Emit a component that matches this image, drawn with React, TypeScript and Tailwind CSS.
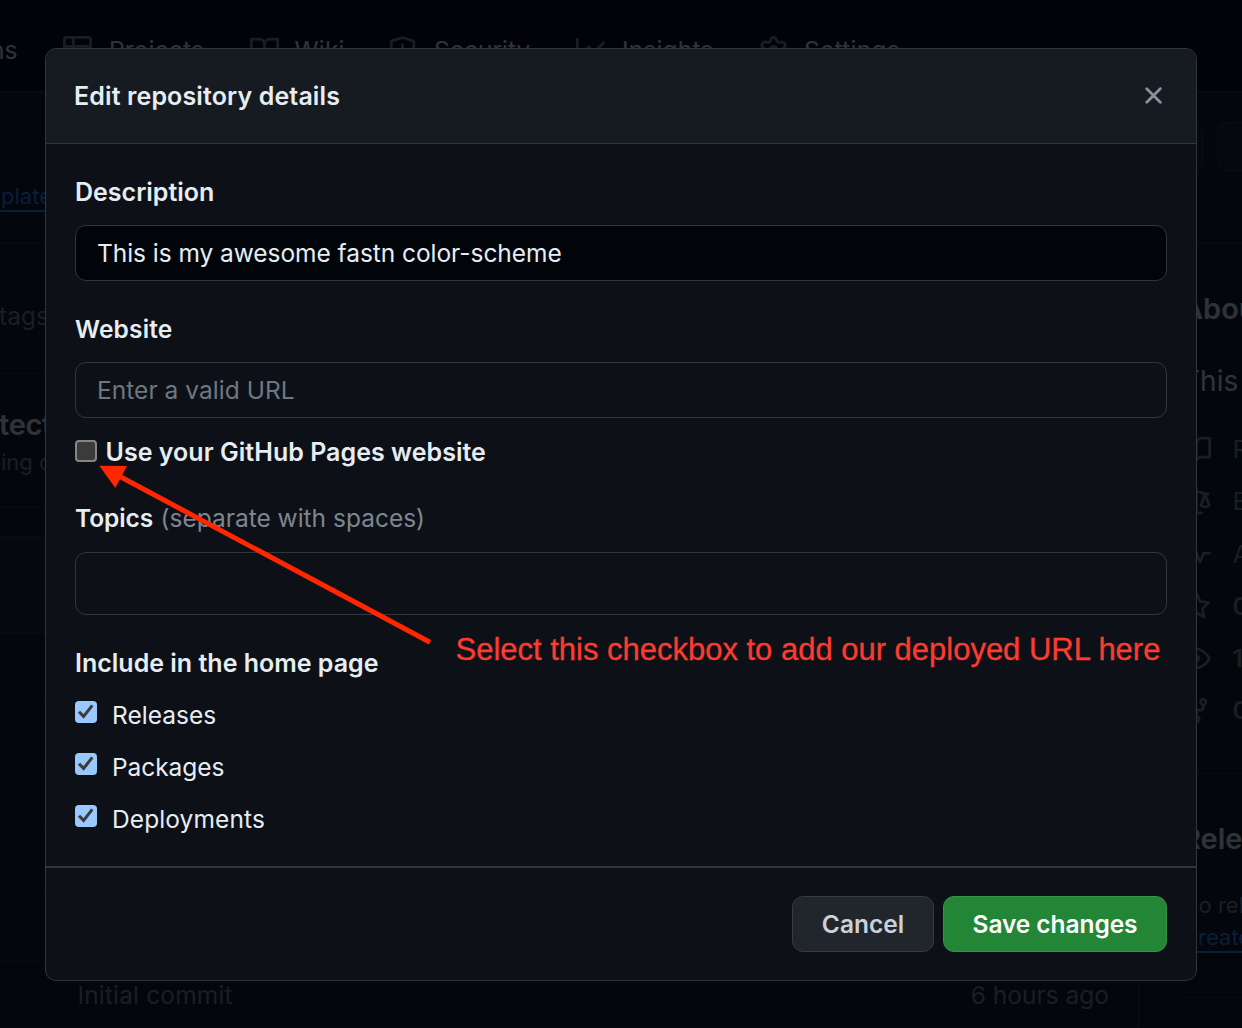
import React from "react";
import type { ReactNode } from "react";

type IconProps = { className?: string };

function Glyph({ className, children }: { className?: string; children: ReactNode }) {
  return (
    <svg viewBox="0 0 16 16" className={className} fill="currentColor" aria-hidden="true">
      {children}
    </svg>
  );
}

const TableIcon = ({ className }: IconProps) => (
  <Glyph className={className}>
    <path d="M0 1.75C0 .784.784 0 1.75 0h12.5C15.216 0 16 .784 16 1.75v12.5A1.75 1.75 0 0 1 14.25 16H1.75A1.75 1.75 0 0 1 0 14.25ZM6.5 6.5v8h7.75a.25.25 0 0 0 .25-.25V6.5Zm8-1.5V1.75a.25.25 0 0 0-.25-.25H6.5V5Zm-13 1.5v7.75c0 .138.112.25.25.25H5v-8ZM5 5V1.5H1.75a.25.25 0 0 0-.25.25V5Z" />
  </Glyph>
);

const BookIcon = ({ className }: IconProps) => (
  <Glyph className={className}>
    <path d="M0 1.75A.75.75 0 0 1 .75 1h4.253c1.227 0 2.317.59 3 1.501A3.743 3.743 0 0 1 11.006 1h4.245a.75.75 0 0 1 .75.75v10.5a.75.75 0 0 1-.75.75h-4.507a2.25 2.25 0 0 0-1.591.659l-.622.621a.75.75 0 0 1-1.06 0l-.622-.621A2.25 2.25 0 0 0 5.258 13H.75a.75.75 0 0 1-.75-.75Zm7.251 10.324.004-5.073-.002-2.253A2.25 2.25 0 0 0 5.003 2.5H1.5v9h3.757a3.75 3.75 0 0 1 1.994.574ZM8.755 4.75l-.004 7.322a3.752 3.752 0 0 1 1.992-.572H14.5v-9h-3.495a2.25 2.25 0 0 0-2.25 2.25Z" />
  </Glyph>
);

const ShieldIcon = ({ className }: IconProps) => (
  <Glyph className={className}>
    <g fill="none" stroke="currentColor" strokeWidth="1.5" strokeLinecap="round">
      <path d="M7.7.95 2.4 2.65a.9.9 0 0 0-.65.9V7c0 3.6 2.3 6.6 6.25 8.2C11.95 13.6 14.25 10.6 14.25 7V3.55a.9.9 0 0 0-.65-.9L8.3.95a1 1 0 0 0-.6 0Z" />
      <path d="M8 4.75v3" />
    </g>
    <circle cx="8" cy="10.5" r="1" />
  </Glyph>
);

const GraphIcon = ({ className }: IconProps) => (
  <Glyph className={className}>
    <path d="M1.5 1.75V13.5h13.75a.75.75 0 0 1 0 1.5H.75a.75.75 0 0 1-.75-.75V1.75a.75.75 0 0 1 1.5 0Zm14.28 2.53-5.25 5.25a.75.75 0 0 1-1.06 0L7 7.06 4.28 9.78a.751.751 0 0 1-1.042-.018.751.751 0 0 1-.018-1.042l3.25-3.25a.75.75 0 0 1 1.06 0L10 7.94l4.72-4.72a.751.751 0 0 1 1.042.018.751.751 0 0 1 .018 1.042Z" />
  </Glyph>
);

const GearIcon = ({ className }: IconProps) => (
  <Glyph className={className}>
    <g fill="none" stroke="currentColor" strokeWidth="1.5" strokeLinejoin="round">
      <path d="M8 .75c1 0 1.3.3 1.5 1.2.3 1.3 1 1.8 2.2 1.5 1.3-.4 1.9-.3 2.5.8.5 1 .4 1.5-.5 2.2-1 .8-1 2.3 0 3.1.9.7 1 1.200.5 2.200-.6 1.100-1.200 1.200-2.500.8-1.200-.3-1.900.200-2.200 1.500-.2.900-.5 1.200-1.500 1.200s-1.300-.3-1.500-1.200c-.3-1.300-1-1.800-2.200-1.500-1.300.4-1.900.3-2.500-.8-.5-1-.4-1.500.5-2.200 1-.8 1-2.300 0-3.100-.9-.7-1-1.200-.5-2.200.6-1.100 1.200-1.200 2.500-.8 1.200.3 1.900-.2 2.200-1.500C6.700 1.050 7 .75 8 .75Z" />
      <circle cx="8" cy="8" r="2.250" />
    </g>
  </Glyph>
);

const CloseIcon = ({ className }: IconProps) => (
  <Glyph className={className}>
    <path d="M3.72 3.72a.75.75 0 0 1 1.06 0L8 6.94l3.22-3.22a.749.749 0 0 1 1.275.326.749.749 0 0 1-.215.734L9.06 8l3.22 3.22a.749.749 0 0 1-.326 1.275.749.749 0 0 1-.734-.215L8 9.06l-3.22 3.22a.751.751 0 0 1-1.042-.018.751.751 0 0 1-.018-1.042L6.94 8 3.72 4.78a.75.75 0 0 1 0-1.06Z" />
  </Glyph>
);

const LawIcon = ({ className }: IconProps) => (
  <Glyph className={className}>
    <g
      fill="none"
      stroke="currentColor"
      strokeWidth="1.5"
      strokeLinecap="round"
      strokeLinejoin="round"
    >
      <path d="M8 .9v13.350M5.200 14.250h5.600M1.500 3.750h2.200L8 2.200l4.300 1.550h2.200" />
      <path d="M3.250 3.900 1 10.200c1.300 1.100 3.200 1.100 4.500 0ZM12.750 3.900 10.500 10.200c1.300 1.100 3.200 1.100 4.500 0Z" />
    </g>
  </Glyph>
);

const PulseIcon = ({ className }: IconProps) => (
  <Glyph className={className}>
    <path d="M6 2c.306 0 .582.187.696.471L10 10.731l1.304-3.26A.751.751 0 0 1 12 7h3.25a.75.75 0 0 1 0 1.5h-2.742l-1.812 4.528a.751.751 0 0 1-1.392 0L6 4.77 4.696 8.03A.75.75 0 0 1 4 8.5H.75a.75.75 0 0 1 0-1.5h2.742l1.812-4.529A.751.751 0 0 1 6 2Z" />
  </Glyph>
);

const StarIcon = ({ className }: IconProps) => (
  <Glyph className={className}>
    <path d="M8 .25a.75.75 0 0 1 .673.418l1.882 3.815 4.21.612a.75.75 0 0 1 .416 1.279l-3.046 2.97.719 4.192a.751.751 0 0 1-1.088.791L8 12.347l-3.766 1.98a.75.75 0 0 1-1.088-.79l.72-4.194L.818 6.374a.75.75 0 0 1 .416-1.28l4.21-.611L7.327.668A.75.75 0 0 1 8 .25Zm0 2.445L6.615 5.5a.75.75 0 0 1-.564.41l-3.097.45 2.24 2.184a.75.75 0 0 1 .216.664l-.528 3.084 2.769-1.456a.75.75 0 0 1 .698 0l2.77 1.456-.53-3.084a.75.75 0 0 1 .216-.664l2.24-2.183-3.096-.45a.75.75 0 0 1-.564-.41L8 2.694Z" />
  </Glyph>
);

const EyeIcon = ({ className }: IconProps) => (
  <Glyph className={className}>
    <path d="M8 2c1.981 0 3.671.992 4.933 2.078 1.27 1.091 2.187 2.345 2.637 3.023a1.62 1.62 0 0 1 0 1.798c-.45.678-1.367 1.932-2.637 3.023C11.67 13.008 9.981 14 8 14c-1.981 0-3.671-.992-4.933-2.078C1.797 10.83.88 9.576.43 8.898a1.62 1.62 0 0 1 0-1.798c.45-.677 1.367-1.931 2.637-3.022C4.33 2.992 6.019 2 8 2ZM1.679 7.932a.12.12 0 0 0 0 .136c.411.622 1.241 1.75 2.366 2.717C5.176 11.758 6.527 12.5 8 12.5c1.473 0 2.825-.742 3.955-1.715 1.124-.967 1.954-2.096 2.366-2.717a.12.12 0 0 0 0-.136c-.412-.621-1.242-1.75-2.366-2.717C10.824 4.242 9.473 3.5 8 3.5c-1.473 0-2.825.742-3.955 1.715-1.124.967-1.954 2.096-2.366 2.717ZM8 10a2 2 0 1 1-.001-3.999A2 2 0 0 1 8 10Z" />
  </Glyph>
);

const ForkIcon = ({ className }: IconProps) => (
  <Glyph className={className}>
    <path d="M5 5.372v.878c0 .414.336.75.75.75h4.5a.75.75 0 0 0 .75-.75v-.878a2.25 2.25 0 1 1 1.5 0v.878a2.25 2.25 0 0 1-2.25 2.25h-1.5v2.128a2.251 2.251 0 1 1-1.5 0V8.5h-1.5A2.25 2.25 0 0 1 3.5 6.25v-.878a2.25 2.25 0 1 1 1.5 0ZM5 3.25a.75.75 0 1 0-1.5 0 .75.75 0 0 0 1.5 0Zm6.75.75a.75.75 0 1 0 0-1.5.75.75 0 0 0 0 1.5Zm-3 8.75a.75.75 0 1 0-1.5 0 .75.75 0 0 0 1.5 0Z" />
  </Glyph>
);

const navItems = [
  { icon: TableIcon, label: "Projects", width: "w-[187px]", tracking: "tracking-[0.1px]", gap: "gap-[17.5px]" },
  { icon: BookIcon, label: "Wiki", width: "w-[138.5px]", tracking: "tracking-[0.16px]", gap: "gap-4" },
  { icon: ShieldIcon, label: "Security", width: "w-[188px]", tracking: "tracking-[0px]", gap: "gap-[17px]" },
  { icon: GraphIcon, label: "Insights", width: "w-[183px]", tracking: "tracking-[0.16px]", gap: "gap-[17px]" },
  { icon: GearIcon, label: "Settings", width: "w-[200px]", tracking: "tracking-[0.28px]", gap: "gap-4" },
];

const aboutRows = [
  { icon: BookIcon, label: "Readme", bold: false },
  { icon: LawIcon, label: "BSD-3-Clause license", bold: false },
  { icon: PulseIcon, label: "Activity", bold: false },
  { icon: StarIcon, label: "0 stars", bold: true },
  { icon: EyeIcon, label: "1 watching", bold: true },
  { icon: ForkIcon, label: "0 forks", bold: true },
];

const homeOptions = [
  { label: "Releases", tracking: "tracking-[0.02px]" },
  { label: "Packages", tracking: "tracking-[-0.06px]" },
  { label: "Deployments", tracking: "tracking-[0.1px]" },
];

function RepositoryPage() {
  return (
    <div className="flex h-full flex-col bg-[#0d1117] whitespace-nowrap text-[#e6edf3]">
      <nav className="flex h-[92px] shrink-0 items-center border-b border-[#2b3138] bg-[#010409] pt-[9px]">
        <div className="flex w-[62.5px] shrink-0 justify-end pr-[45px]">Actions</div>
        {navItems.map(({ icon: Icon, label, width, tracking, gap }) => (
          <div key={label} className={`flex shrink-0 items-center ${gap} ${width} ${tracking}`}>
            <Icon className="size-[29px] shrink-0 text-[#7d8590]" />
            {label}
          </div>
        ))}
      </nav>

      <div className="flex h-[152px] shrink-0 justify-between border-b border-[#2b3138]">
        <div className="pt-[89px] text-[22px] leading-[30px] text-[#2f81f7]">
          <span className="inline-block h-[31px] border-b-2 border-[#2f81f7] pl-px">plate</span>
        </div>
        <div className="flex gap-[14px] pt-[30px]">
          <div className="h-[49px] w-[120px] rounded-[11px] border border-[#30363d] bg-[#161b22]" />
          <div className="-mr-8 h-[49px] w-[57px] rounded-[11px] border border-[#30363d] bg-[#161b22]" />
        </div>
      </div>

      <div className="flex min-h-0 flex-1">
        <div className="flex w-[1139px] shrink-0 flex-col border-r border-[#2b3138]">
          <div className="h-[130px] shrink-0 border-b border-[#2b3138] pt-[57px] leading-[30px] text-[#7d8590]">
            <span className="-ml-px">tags</span>
          </div>
          <div className="h-[134px] shrink-0 border-b border-[#2b3138] pt-[35px]">
            <div className="-ml-px text-[29px] leading-[32px] font-semibold tracking-[-0.3px]">tected</div>
            <div className="pt-[6px] pl-px text-[22px] leading-[30px] text-[#7d8590]">ing or</div>
          </div>
          <div className="mt-[28px] h-[98px] shrink-0 border-y border-[#2b3138] bg-[#161b22]" />
          <div className="h-[65px] shrink-0 border-b border-[#1b2027]" />
          <div className="h-[66px] shrink-0 border-b border-[#1b2027]" />
          <div className="h-[65px] shrink-0 border-b border-[#1b2027]" />
          <div className="h-[66px] shrink-0 border-b border-[#1b2027]" />
          <div className="h-[66px] shrink-0 border-b border-[#21262d]" />
          <div className="flex h-[66px] shrink-0 items-center justify-between border-b border-[#21262d] pt-[2px] pr-[29px] pl-[77.5px] text-[#7d8590]">
            <span className="tracking-[0.15px]">Initial commit</span>
            <span>6 hours ago</span>
          </div>
        </div>

        <aside className="ml-[43px] flex flex-1 flex-col overflow-hidden">
          <h2 className="pt-[48px] text-[29px] leading-[34px] font-semibold">About</h2>
          <p className="pt-[37px] text-[28px] leading-[36px]">This is my</p>
          <div className="flex flex-col gap-[22.2px] pt-[35.5px] text-[#7d8590]">
            {aboutRows.map(({ icon: Icon, label, bold }) => (
              <div key={label} className="flex h-[30px] items-center gap-[21.5px]">
                <Icon className="size-[29px] shrink-0" />
                <span className={bold ? "font-semibold" : ""}>{label}</span>
              </div>
            ))}
          </div>
          <div className="mt-[47.5px] border-t border-[#21262d] pt-[48px]">
            <h2 className="text-[29px] leading-[34px] font-semibold">Releases</h2>
            <p className="pt-[34px] text-[22px] leading-[30px] text-[#7d8590]">No releases</p>
            <p className="flex pt-[2px] text-[22px] leading-[30px] text-[#2f81f7]">
              <span className="h-[31px] border-b-2 border-[#2f81f7]">Create a new</span>
            </p>
          </div>
          <div className="mt-[44px] border-t border-[#21262d]" />
        </aside>
      </div>
    </div>
  );
}

function CheckedBox() {
  return (
    <span className="mt-px flex size-[22px] shrink-0 rounded-[4px] bg-[#99c8ff]">
      <svg viewBox="0 0 22 22" className="size-full" fill="none" stroke="#3b3b3b" strokeWidth="3">
        <path d="M4 10.8 8.600 15.400 17.300 4.400" />
      </svg>
    </span>
  );
}

function EditDialog() {
  return (
    <div
      role="dialog"
      className="absolute top-[48px] left-[45px] flex h-[933px] w-[1152px] flex-col overflow-hidden rounded-[11px] border border-[#30363d] bg-[#0d1117] leading-[30px] text-[#e6edf3]"
    >
      <header className="flex h-[95px] shrink-0 items-center justify-between border-b border-[#30363d] bg-[#161b22] pr-[28px] pl-[28px]">
        <h1 className="text-[25px] font-semibold tracking-[0.12px]">Edit repository details</h1>
        <button aria-label="Close" className="mb-px">
          <CloseIcon className="size-[29px] text-[#8b949e]" />
        </button>
      </header>

      <div className="flex flex-1 flex-col px-[29px] pt-[33px]">
        <label className="text-[25px] font-semibold">Description</label>
        <div className="mt-[18px] flex h-14 items-center rounded-[11px] border border-[#30363d] bg-[#010409] px-[21px] tracking-[-0.05px]">
          This is my awesome fastn color-scheme
        </div>

        <label className="mt-[33px] font-semibold tracking-[0.16px]">Website</label>
        <div className="mt-[18px] flex h-14 items-center rounded-[11px] border border-[#30363d] px-[21px] tracking-[0.04px] text-[#6e7681]">
          Enter a valid URL
        </div>
        <div className="mt-[19px] flex text-[25px] font-semibold">
          <span className="mt-[3px] mr-[8.5px] size-[22px] shrink-0 rounded-[4px] border-2 border-[#858585] bg-[#3b3b3b]" />
          <span className="tracking-[0.03px]">Use your GitHub Pages website</span>
        </div>

        <div className="mt-[36px] flex gap-[7.5px]">
          <label className="font-semibold tracking-[-0.1px]">Topics</label>
          <span className="text-[#7d8590]">(separate with spaces)</span>
        </div>
        <div className="mt-[19px] h-[63px] rounded-[11px] border border-[#30363d]" />

        <h2 className="mt-[33px] text-[25px] font-semibold">Include in the home page</h2>
        <div className="mt-[22px] flex flex-col gap-[22px]">
          {homeOptions.map(({ label, tracking }) => (
            <label key={label} className="flex gap-[15px]">
              <CheckedBox />
              <span className={tracking}>{label}</span>
            </label>
          ))}
        </div>
      </div>

      <footer className="flex h-[114px] shrink-0 items-center justify-end gap-[9px] border-t-2 border-[#30363d] pr-[29px]">
        <button className="h-14 w-[142px] rounded-[11px] border border-[#363b42] bg-[#21262d] font-semibold text-[#c9d1d9]">
          Cancel
        </button>
        <button className="h-14 w-[224px] rounded-[11px] border border-[#39924a] bg-[#238636] font-semibold tracking-[-0.07px] text-white">
          Save changes
        </button>
      </footer>
    </div>
  );
}

function Annotation() {
  return (
    <>
      <svg
        viewBox="0 0 336 184"
        className="absolute top-[463px] left-[97px] h-[184px] w-[336px]"
        fill="#ff2600"
      >
        <path d="M2.3 2.7 30 3 18.3 25Z" />
        <path d="M22 13 333 179.2" stroke="#ff2600" strokeWidth="5" />
      </svg>
      <p className="absolute top-[632px] left-[455.5px] font-['Liberation_Sans',Arial,sans-serif] text-[31px] leading-[36px] tracking-[-0.01px] whitespace-nowrap text-[#ff3b30] [-webkit-text-stroke:0.3px]">
        Select this checkbox to add our deployed URL here
      </p>
    </>
  );
}

export default function App() {
  return (
    <div className="relative h-[1028px] w-[1242px] overflow-hidden font-[Inter,sans-serif] text-[24.5px]">
      <RepositoryPage />
      <div className="absolute inset-0 bg-[#010409]/80" />
      <EditDialog />
      <Annotation />
    </div>
  );
}
